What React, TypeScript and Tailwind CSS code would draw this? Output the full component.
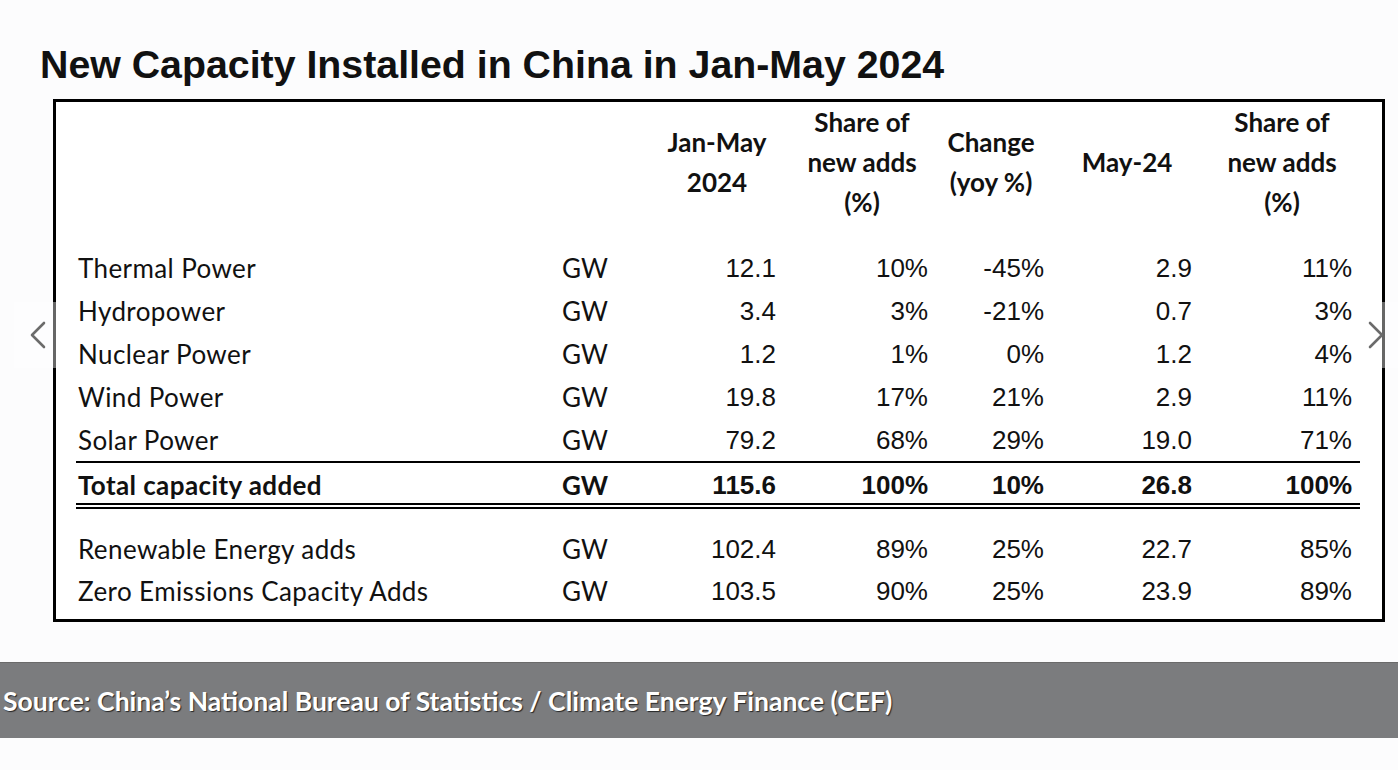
import React from "react";

type Row = {
  label: string;
  unit: string;
  values: string[];
};

const mainRows: Row[] = [
  { label: "Thermal Power", unit: "GW", values: ["12.1", "10%", "-45%", "2.9", "11%"] },
  { label: "Hydropower", unit: "GW", values: ["3.4", "3%", "-21%", "0.7", "3%"] },
  { label: "Nuclear Power", unit: "GW", values: ["1.2", "1%", "0%", "1.2", "4%"] },
  { label: "Wind Power", unit: "GW", values: ["19.8", "17%", "21%", "2.9", "11%"] },
  { label: "Solar Power", unit: "GW", values: ["79.2", "68%", "29%", "19.0", "71%"] },
];

const total: Row = {
  label: "Total capacity added",
  unit: "GW",
  values: ["115.6", "100%", "10%", "26.8", "100%"],
};

const extraRows: Row[] = [
  { label: "Renewable Energy adds", unit: "GW", values: ["102.4", "89%", "25%", "22.7", "85%"] },
  { label: "Zero Emissions Capacity Adds", unit: "GW", values: ["103.5", "90%", "25%", "23.9", "89%"] },
];

// column widths: label, unit, jan-may, share, change, may-24, share
const cols = "grid grid-cols-[486px_96px_118px_152px_116px_148px_168px]";

function DataRow({ row, bold, height }: { row: Row; bold?: boolean; height: string }) {
  const weight = bold ? "font-bold" : "font-normal";
  return (
    <div className={`${cols} ${height} items-center text-[#111]`}>
      <div className={`pl-[2px] font-['Lato'] text-[26px] leading-none tracking-[0.4px] ${weight}`}>{row.label}</div>
      <div className={`font-['Lato'] text-[26px] leading-none ${weight}`}>{row.unit}</div>
      {row.values.map((v, i) => (
        <div
          key={i}
          className={`text-right font-['Liberation_Sans'] text-[26px] leading-none ${weight} ${i === 4 ? "pr-2" : ""}`}
        >
          {v}
        </div>
      ))}
    </div>
  );
}

function Chevron({ dir }: { dir: "left" | "right" }) {
  return (
    <svg width="17" height="28" viewBox="0 0 17 28" fill="none">
      <polyline
        points={dir === "left" ? "15,2 3,14 15,26" : "2,2 14,14 2,26"}
        stroke="#6b6b6b"
        strokeWidth="2.6"
        strokeLinecap="round"
        strokeLinejoin="round"
      />
    </svg>
  );
}

export default function App() {
  return (
    <div className="relative min-h-screen bg-[#fcfcfd]">
      {/* TITLE */}
      <h1 className="pl-[40px] pt-[45px] font-['Liberation_Sans'] text-[39.3px] leading-none font-bold text-[#111]">
        New Capacity Installed in China in Jan-May 2024
      </h1>

      {/* TABLE */}
      <div className="ml-[53px] mt-[15px] h-[523px] w-[1332px] border-[3px] border-black bg-white">
        <div className="ml-[20px] w-[1284px]">
          {/* header */}
          <div className={`${cols} h-[120px] items-center font-['Lato'] text-[26px] leading-[40px] font-bold text-[#111]`}>
            <div />
            <div />
            <div className="text-center">
              Jan-May
              <br />
              2024
            </div>
            <div className="pl-5 text-center">
              Share of
              <br />
              new adds
              <br />
              (%)
            </div>
            <div className="pl-[10px] text-center">
              Change
              <br />
              (yoy %)
            </div>
            <div className="pl-[18px] text-center">May-24</div>
            <div className="pl-5 pr-2 text-center">
              Share of
              <br />
              new adds
              <br />
              (%)
            </div>
          </div>

          {/* rows */}
          <div className="mt-[24px]">
            {mainRows.map((r) => (
              <DataRow key={r.label} row={r} height="h-[43px]" />
            ))}
          </div>

          {/* total */}
          <div className="border-t-2 border-b-[6px] border-double border-t-solid border-black pt-1">
            <DataRow row={total} bold height="h-[36px]" />
          </div>

          {/* renewables */}
          <div className="pt-[19px]">
            {extraRows.map((r) => (
              <DataRow key={r.label} row={r} height="h-[42px]" />
            ))}
          </div>
        </div>
      </div>

      {/* SOURCE */}
      <div className="mt-[40px] flex h-[76px] items-center border-t border-[#6a6a6a] bg-[#7b7c7e] pl-[3px]">
        <p className="font-['Lato'] text-[26.5px] leading-none font-bold tracking-[0px] text-white [text-shadow:1px_1px_1px_rgba(0,0,0,0.7)]">
          Source: China’s National Bureau of Statistics / Climate Energy Finance (CEF)
        </p>
      </div>

      {/* carousel arrows */}
      <button className="absolute left-[14px] top-[302px] flex h-[66px] w-[46px] items-center justify-center bg-white/40">
        <Chevron dir="left" />
      </button>
      <button className="absolute left-[1354px] top-[302px] flex h-[66px] w-[44px] items-center justify-center bg-white/40">
        <Chevron dir="right" />
      </button>
    </div>
  );
}
